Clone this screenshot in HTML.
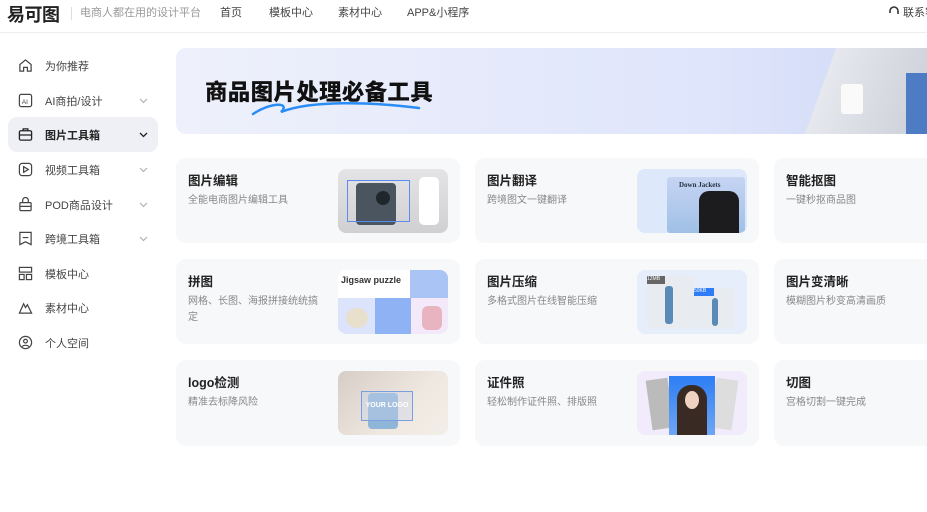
<!DOCTYPE html>
<html><head><meta charset="utf-8"><style>
*{margin:0;padding:0;box-sizing:border-box}
body{width:927px;height:512px;overflow:hidden;background:#fff;font-family:"Liberation Sans","Noto Sans CJK SC",sans-serif;position:relative;color:#222}
.abs{position:absolute}
.hdr{left:0;top:0;width:927px;height:33px;border-bottom:1px solid #eee}
.nav{top:4px;font-size:11px;color:#444}
.item{position:absolute;left:8px;width:150px;height:35px;border-radius:9px;font-size:11px;color:#444}
.item .t{position:absolute;left:37px;top:10px}
.item svg.i{position:absolute;left:10px;top:10px}
.item svg.c{position:absolute;left:131px;top:15px}
.card{position:absolute;width:284px;height:85px;background:#f7f8fa;border-radius:10px}
.card .h{position:absolute;left:12px;top:12px;font-size:12.5px;font-weight:bold;color:#222}
.card .d{position:absolute;left:12px;top:35px;font-size:10px;color:#888;width:134px;line-height:16px}
.card .im{position:absolute;left:162px;top:11px;width:110px;height:64px;border-radius:8px;overflow:hidden}
</style></head><body>
<div class="abs hdr"></div>
<div class="abs" style="left:7px;top:1px;font-size:18px;font-weight:bold;color:#222;letter-spacing:-0.5px">易可图</div>
<div class="abs" style="left:71px;top:7px;width:1px;height:13px;background:#ddd"></div>
<div class="abs" style="left:80px;top:4px;font-size:11px;color:#999">电商人都在用的设计平台</div>
<div class="abs nav" style="left:220px">首页</div>
<div class="abs nav" style="left:269px">模板中心</div>
<div class="abs nav" style="left:338px">素材中心</div>
<div class="abs nav" style="left:407px">APP&amp;小程序</div>
<svg class="abs" style="left:888px;top:5px" width="12" height="12" viewBox="0 0 12 12" fill="none" stroke="#333" stroke-width="1.6"><path d="M2 8V6a4 4 0 018 0v3"/></svg>
<div class="abs" style="left:903px;top:4px;font-size:11px;color:#444;white-space:nowrap">联系客服</div>

<div class="item" style="top:48px"><svg class="i" width="15" height="15" viewBox="0 0 16 16" fill="none" stroke="#444" stroke-width="1.3"><path d="M2 7l6-5 6 5v7H10v-4H6v4H2z"/></svg><span class="t">为你推荐</span></div>
<div class="item" style="top:83px"><svg class="i" width="15" height="15" viewBox="0 0 16 16" fill="none" stroke="#444" stroke-width="1.3"><rect x="1.5" y="1.5" width="13" height="13" rx="2"/><text x="4" y="11.5" font-size="7" fill="#444" stroke="none" font-family="Liberation Sans">AI</text></svg><span class="t">AI商拍/设计</span><svg class="c" width="9" height="6" viewBox="0 0 9 6" fill="none" stroke="#aaa" stroke-width="1"><path d="M1 1l3.5 3.5L8 1"/></svg></div>
<div class="item" style="top:117px;background:#eef0f5;font-weight:bold;color:#222"><svg class="i" width="15" height="15" viewBox="0 0 16 16" fill="none" stroke="#222" stroke-width="1.4"><rect x="1.5" y="4" width="13" height="10" rx="1.5"/><path d="M5.5 4V2h5v2M1.5 8.5h13"/></svg><span class="t">图片工具箱</span><svg class="c" width="9" height="6" viewBox="0 0 9 6" fill="none" stroke="#222" stroke-width="1.3"><path d="M1 1l3.5 3.5L8 1"/></svg></div>
<div class="item" style="top:152px"><svg class="i" width="15" height="15" viewBox="0 0 16 16" fill="none" stroke="#444" stroke-width="1.3"><rect x="1.5" y="1.5" width="13" height="13" rx="3"/><path d="M6 5l5 3-5 3z"/></svg><span class="t">视频工具箱</span><svg class="c" width="9" height="6" viewBox="0 0 9 6" fill="none" stroke="#aaa" stroke-width="1"><path d="M1 1l3.5 3.5L8 1"/></svg></div>
<div class="item" style="top:187px"><svg class="i" width="15" height="15" viewBox="0 0 16 16" fill="none" stroke="#444" stroke-width="1.3"><rect x="2" y="6" width="12" height="8.5" rx="1"/><path d="M5 6V3.5a3 3 0 016 0V6M2 10h12"/></svg><span class="t">POD商品设计</span><svg class="c" width="9" height="6" viewBox="0 0 9 6" fill="none" stroke="#aaa" stroke-width="1"><path d="M1 1l3.5 3.5L8 1"/></svg></div>
<div class="item" style="top:221px"><svg class="i" width="15" height="15" viewBox="0 0 16 16" fill="none" stroke="#444" stroke-width="1.3"><path d="M2 1.5h12v13l-6-3-6 3z M5 7h6"/></svg><span class="t">跨境工具箱</span><svg class="c" width="9" height="6" viewBox="0 0 9 6" fill="none" stroke="#aaa" stroke-width="1"><path d="M1 1l3.5 3.5L8 1"/></svg></div>
<div class="item" style="top:256px"><svg class="i" width="15" height="15" viewBox="0 0 16 16" fill="none" stroke="#444" stroke-width="1.3"><rect x="1.5" y="1.5" width="13" height="5"/><rect x="1.5" y="9" width="5" height="5.5"/><rect x="9" y="9" width="5.5" height="5.5"/></svg><span class="t">模板中心</span></div>
<div class="item" style="top:290px"><svg class="i" width="15" height="15" viewBox="0 0 16 16" fill="none" stroke="#444" stroke-width="1.3"><path d="M1.5 14L6 4l2 4 2-3 4.5 9z"/></svg><span class="t">素材中心</span></div>
<div class="item" style="top:325px"><svg class="i" width="15" height="15" viewBox="0 0 16 16" fill="none" stroke="#444" stroke-width="1.3"><circle cx="8" cy="8" r="6.5"/><circle cx="8" cy="6.5" r="2"/><path d="M4.5 12.5c1-2 6-2 7 0"/></svg><span class="t">个人空间</span></div>

<div class="abs" style="left:176px;top:48px;width:760px;height:86px;border-radius:10px;background:linear-gradient(90deg,#eef1fb,#dfe5fb 70%,#cfd8f5);overflow:hidden">
 <div class="abs" style="left:29px;top:27px;font-size:22.5px;font-weight:900;color:#111;letter-spacing:0.3px">商品图片处理必备工具</div>
 <svg class="abs" style="left:75px;top:50px" width="175" height="20" viewBox="0 0 175 20"><path d="M2 16C20 4 40 4 30 14 60 2 120 4 168 10" fill="none" stroke="#2a8cf5" stroke-width="2.5" stroke-linecap="round"/></svg>
 <div class="abs" style="left:625px;top:0;width:140px;height:86px;background:linear-gradient(110deg,transparent 20%,#e6e8ee 21%,#d3d6de 70%,#c8ccd6);"></div>
 <div class="abs" style="left:665px;top:36px;width:22px;height:30px;background:#fafafa;border-radius:3px"></div>
 <div class="abs" style="left:730px;top:25px;width:30px;height:61px;background:#4d7cc4"></div>
</div>

<div class="card" style="left:176px;top:158px"><div class="h">图片编辑</div><div class="d">全能电商图片编辑工具</div>
 <div class="im" style="background:linear-gradient(#e4e4e6,#d0d0d2)">
  <div class="abs" style="left:18px;top:14px;width:40px;height:42px;background:#4a5560;border-radius:4px"></div>
  <div class="abs" style="left:38px;top:22px;width:14px;height:14px;border-radius:50%;background:#1f262c"></div>
  <div class="abs" style="left:9px;top:11px;width:63px;height:42px;border:1px solid #5a8dee"></div>
  <div class="abs" style="left:81px;top:8px;width:20px;height:48px;background:#fff;border-radius:5px"></div>
 </div></div>
<div class="card" style="left:475px;top:158px"><div class="h">图片翻译</div><div class="d">跨境图文一键翻译</div>
 <div class="im" style="background:#dde8fb">
  <div class="abs" style="left:30px;top:8px;width:78px;height:56px;background:linear-gradient(#c7d4f3,#9fc0e6);border-radius:3px"></div>
  <div class="abs" style="left:42px;top:12px;font-size:7px;font-weight:bold;color:#234;font-family:'Liberation Serif',serif">Down Jackets</div>
  <div class="abs" style="left:62px;top:22px;width:40px;height:42px;background:#1c1c1e;border-radius:10px 10px 0 0"></div>
 </div></div>
<div class="card" style="left:774px;top:158px"><div class="h">智能抠图</div><div class="d">一键秒抠商品图</div></div>
<div class="card" style="left:176px;top:259px"><div class="h">拼图</div><div class="d">网格、长图、海报拼接统统搞定</div>
 <div class="im" style="background:#fff">
  <div class="abs" style="left:3px;top:5px;font-size:9px;font-weight:bold;color:#333">Jigsaw puzzle</div>
  <div class="abs" style="left:72px;top:0;width:38px;height:28px;background:#a9c4f5"></div>
  <div class="abs" style="left:0;top:28px;width:37px;height:36px;background:#dbe4fb"></div>
  <div class="abs" style="left:37px;top:28px;width:36px;height:36px;background:#8fb2f4"></div>
  <div class="abs" style="left:73px;top:28px;width:37px;height:36px;background:#f3e9fb"></div>
  <div class="abs" style="left:8px;top:38px;width:22px;height:20px;border-radius:50%;background:#e8e0cc"></div>
  <div class="abs" style="left:84px;top:36px;width:20px;height:24px;border-radius:6px;background:#e8b4c0"></div>
 </div></div>
<div class="card" style="left:475px;top:259px"><div class="h">图片压缩</div><div class="d">多格式图片在线智能压缩</div>
 <div class="im" style="background:#e6eefc">
  <div class="abs" style="left:10px;top:6px;width:48px;height:52px;background:#e8ecf0;border-radius:4px"></div>
  <div class="abs" style="left:58px;top:18px;width:40px;height:40px;background:#e8ecf0;border-radius:4px"></div>
  <div class="abs" style="left:28px;top:16px;width:8px;height:38px;background:#5a8ab8;border-radius:3px"></div>
  <div class="abs" style="left:75px;top:28px;width:6px;height:28px;background:#5a8ab8;border-radius:3px"></div>
  <div class="abs" style="left:10px;top:6px;width:18px;height:8px;background:#666;font-size:5px;color:#fff">12MB</div>
  <div class="abs" style="left:57px;top:18px;width:20px;height:8px;background:#2f7cf6;font-size:5px;color:#fff">50KB</div>
 </div></div>
<div class="card" style="left:774px;top:259px"><div class="h">图片变清晰</div><div class="d">模糊图片秒变高清画质</div></div>
<div class="card" style="left:176px;top:360px;height:86px"><div class="h">logo检测</div><div class="d">精准去标降风险</div>
 <div class="im" style="background:linear-gradient(135deg,#d6cdc6,#efe8e0 60%,#f3eee8)">
  <div class="abs" style="left:30px;top:22px;width:30px;height:36px;background:#8fb6d8;border-radius:4px"></div>
  <div class="abs" style="left:23px;top:20px;width:52px;height:30px;border:1px solid #7a9fe0;background:rgba(200,210,235,.4);font-size:7px;color:#fff;font-weight:bold;text-align:center;line-height:28px">YOUR LOGO</div>
 </div></div>
<div class="card" style="left:475px;top:360px;height:86px"><div class="h">证件照</div><div class="d">轻松制作证件照、排版照</div>
 <div class="im" style="background:#f1ebfb">
  <div class="abs" style="left:12px;top:8px;width:22px;height:50px;background:#bbb;transform:rotate(-8deg)"></div>
  <div class="abs" style="left:76px;top:8px;width:22px;height:50px;background:#ddd;transform:rotate(8deg)"></div>
  <div class="abs" style="left:32px;top:5px;width:46px;height:59px;background:linear-gradient(#2d7ef5,#6fa6f4)"></div>
  <div class="abs" style="left:40px;top:14px;width:30px;height:50px;background:#3a2a24;border-radius:14px 14px 0 0"></div>
  <div class="abs" style="left:48px;top:20px;width:14px;height:18px;background:#f0d2c2;border-radius:50%"></div>
 </div></div>
<div class="card" style="left:774px;top:360px;height:86px"><div class="h">切图</div><div class="d">宫格切割一键完成</div></div>
</body></html>
